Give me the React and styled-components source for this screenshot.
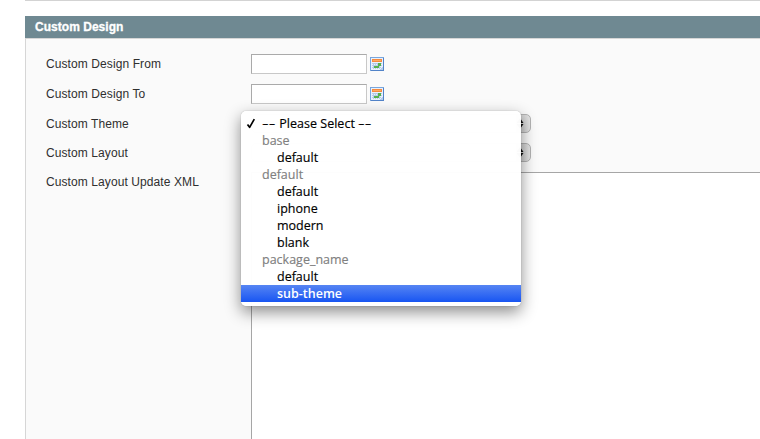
import React from 'react';
import styled, { createGlobalStyle } from 'styled-components';

const GlobalStyle = createGlobalStyle`
  * { box-sizing: border-box; }
  body { margin: 0; background: #fff; overflow: hidden; }
`;

const Page = styled.main`
  height: 439px;
  padding-left: 25px;
  overflow: hidden;
  font: 12px/15px "Liberation Sans", Arial, sans-serif;
  color: #2f2f2f;
`;

const Divider = styled.div`
  height: 1px;
  margin-bottom: 15px;
  background: #d3d3d3;
`;

const SectionHeader = styled.h4`
  height: 22px;
  margin: 0;
  padding: 0 10px;
  background: #6f8992;
  color: #fff;
  font-size: 12px;
  line-height: 22px;
  font-weight: bold;
  letter-spacing: 0.03px;
  -webkit-text-stroke: 0.3px #fff;
`;

const Fieldset = styled.section`
  height: 401px;
  padding: 15px 0 0 20px;
  border: solid #d6d6d6;
  border-width: 1px 0 0 1px;
  background: #fafafa;
`;

const FieldRow = styled.div`
  display: grid;
  grid-template-columns: 205px 1fr;
  height: ${(p) => p.$height}px;
`;

const Label = styled.label`
  padding-top: 3px;
  letter-spacing: 0.09px;
  white-space: nowrap;
`;

const DateField = styled.div`
  display: flex;
  align-items: flex-start;
  gap: 3px;
`;

const TextInput = styled.input`
  width: 116px;
  height: 20px;
  padding: 2px;
  border: 1px solid;
  border-color: #aaa #c8c8c8 #c8c8c8 #aaa;
  border-radius: 0;
  outline: 0;
  background: #fff;
`;

const CalendarSvg = styled.svg`
  display: block;
  margin-top: 3px;
`;

const SelectHolder = styled.div`
  position: relative;
  width: 280px;
  height: 20px;
`;

const SelectButton = styled.div`
  display: flex;
  align-items: center;
  justify-content: flex-end;
  height: 19px;
  padding-right: 6px;
  border: 1px solid #b3b3b3;
  border-radius: 5px;
  background: linear-gradient(90deg, transparent 258px, #c9c9c9 266px, #e7e7e7 279px), #fff;
`;

const XmlEditor = styled.textarea`
  height: 280px;
  border: solid #a6a6a6;
  border-width: 1px 0 0 1px;
  border-radius: 0;
  outline: 0;
  resize: none;
  background: #fff;
`;

const Menu = styled.ul`
  position: absolute;
  z-index: 2;
  left: -10px;
  top: -3px;
  width: 280px;
  height: 195px;
  margin: 0;
  padding: 4px 0;
  list-style: none;
  border-radius: 5px;
  background: rgba(255, 255, 255, 0.98);
  box-shadow: 0 0 1px rgba(0, 0, 0, 0.4), 0 6px 16px rgba(0, 0, 0, 0.46);
  color: #000;
  font: 12.5px/17px "Open Sans", "Noto Sans", sans-serif;
`;

const MenuItem = styled.li`
  display: flex;
  align-items: center;
  height: 17px;
  padding-left: ${(p) => (p.$kind === 'option' ? 36 : p.$kind === 'group' ? 21 : 5)}px;
  color: ${(p) => (p.$active ? '#fff' : p.$kind === 'group' ? '#808080' : '#000')};
  background: ${(p) => (p.$active ? 'linear-gradient(#5685f3, #1855f2)' : 'transparent')};
  font-weight: ${(p) => (p.$active ? 600 : 400)};
  -webkit-text-stroke: ${(p) => (p.$active ? 0 : 0.15)}px currentColor;
  white-space: pre;
`;

const PlaceholderText = styled.span`
  display: flex;
  white-space: pre;
  letter-spacing: 0.02px;
`;

const Dashes = styled.span`
  width: 14px;
  transform: scaleX(1.65);
  transform-origin: left;
`;

const CheckSvg = styled.svg`
  flex: none;
  width: 10px;
  margin-right: 6px;
`;

function CalendarIcon() {
  return (
    <CalendarSvg width="14" height="14" viewBox="0 0 14 14" shapeRendering="crispEdges">
      <path fill="#79a6dd" d="M0 0h14v14H0z" />
      <path fill="#5283c8" d="M13 1h1v13H1v-1h12z" />
      <path fill="#e9f1fc" d="M1 1h12v12H1z" />
      <path fill="#f68a3e" d="M2 2h10v3H2z" />
      <path fill="#ffab62" d="M3 3h8v1H3z" />
      <path fill="#b6cbe9" d="M2 6h10v1H2zM2 8h10v1H2zM2 10h9v1H2zM3 6h1v6H3zM5 6h1v6H5zM7 6h1v6H7zM9 6h1v6H9z" />
      <path fill="#55b24e" d="M8 6h3v3H8zM7 9h2v2H7zM4 9h3v2H4z" />
      <path fill="#b2cdef" d="M10 12h1v-1h1v-1h1v3h-3z" />
    </CalendarSvg>
  );
}

function SelectArrows() {
  return (
    <svg width="8" height="11" viewBox="0 0 8 11">
      <path fill="#111" d="M4 0 7.5 4.9h-7zM.5 6.1h7L4 11z" />
    </svg>
  );
}

function CheckMark() {
  return (
    <CheckSvg height="11" viewBox="0 0 10 11">
      <path d="M1.5 6.4 3.6 9.3 8.3 1.1" fill="none" stroke="#000" strokeWidth="1.7" strokeLinejoin="round" />
    </CheckSvg>
  );
}

function Placeholder() {
  return (
    <PlaceholderText>
      <Dashes>--</Dashes>
      {' Please Select '}
      <Dashes>--</Dashes>
    </PlaceholderText>
  );
}

const options = [
  { kind: 'selected' },
  { text: 'base', kind: 'group' },
  { text: 'default', kind: 'option' },
  { text: 'default', kind: 'group' },
  { text: 'default', kind: 'option' },
  { text: 'iphone', kind: 'option' },
  { text: 'modern', kind: 'option' },
  { text: 'blank', kind: 'option' },
  { text: 'package_name', kind: 'group' },
  { text: 'default', kind: 'option' },
  { text: 'sub-theme', kind: 'option', active: true },
];

function DateRow({ children }) {
  return (
    <FieldRow $height={30}>
      <Label>{children}</Label>
      <DateField>
        <TextInput aria-label={children} />
        <CalendarIcon />
      </DateField>
    </FieldRow>
  );
}

export default function App() {
  return (
    <>
      <GlobalStyle />
      <Page>
        <Divider />
        <SectionHeader>Custom Design</SectionHeader>
        <Fieldset>
          <DateRow>Custom Design From</DateRow>
          <DateRow>Custom Design To</DateRow>
          <FieldRow $height={29}>
            <Label>Custom Theme</Label>
            <SelectHolder>
              <SelectButton><SelectArrows /></SelectButton>
              <Menu>
                {options.map((o, i) => (
                  <MenuItem key={i} $kind={o.kind} $active={o.active}>
                    {o.kind === 'selected' ? <><CheckMark /><Placeholder /></> : o.text}
                  </MenuItem>
                ))}
              </Menu>
            </SelectHolder>
          </FieldRow>
          <FieldRow $height={29}>
            <Label>Custom Layout</Label>
            <SelectHolder>
              <SelectButton><SelectArrows /></SelectButton>
            </SelectHolder>
          </FieldRow>
          <FieldRow $height={280}>
            <Label>Custom Layout Update XML</Label>
            <XmlEditor aria-label="Custom Layout Update XML" />
          </FieldRow>
        </Fieldset>
      </Page>
    </>
  );
}
